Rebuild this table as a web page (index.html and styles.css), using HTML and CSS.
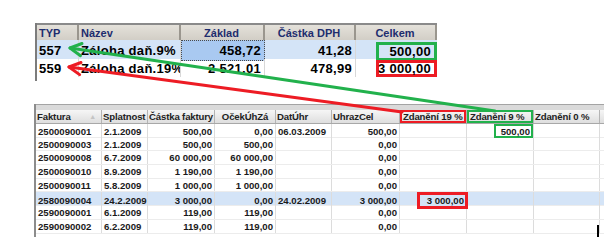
FILE: index.html
```html
<!DOCTYPE html>
<html lang="cs">
<head>
<meta charset="utf-8">
<title>Zálohy</title>
<link rel="stylesheet" href="styles.css">
</head>
<body>
<div class="page">
  <div class="top">
    <div class="trow thead">
      <div class="c">TYP</div>
      <div class="c">Název</div>
      <div class="c ctr">Základ</div>
      <div class="c ctr">Částka DPH</div>
      <div class="c ctr">Celkem</div>
    </div>
    <div class="trow r1 sel">
      <div class="c">557</div>
      <div class="c">Záloha daň.9%</div>
      <div class="c num focus">458,72</div>
      <div class="c num">41,28</div>
      <div class="c boxcell"><span class="tbox green">500,00</span></div>
    </div>
    <div class="trow r2">
      <div class="c">559</div>
      <div class="c">Záloha daň.19%</div>
      <div class="c num">2 521,01</div>
      <div class="c num">478,99</div>
      <div class="c boxcell"><span class="tbox red">3 000,00</span></div>
    </div>
  </div>

  <div class="grid">
    <div class="band"></div>
    <div class="grow ghead">
      <div class="g">Faktura<span class="sort">▲</span></div>
      <div class="g">Splatnost</div>
      <div class="g">Částka faktury</div>
      <div class="g ctr">OčekÚhZá</div>
      <div class="g">DatÚhr</div>
      <div class="g">UhrazCel</div>
      <div class="g hred">Zdanění 19 %</div>
      <div class="g hgreen">Zdanění 9 %</div>
      <div class="g">Zdanění 0 %</div>
    </div>
    <div class="grow">
      <div class="g">2500090001</div><div class="g">2.1.2009</div><div class="g num">500,00</div><div class="g num">0,00</div><div class="g">06.03.2009</div><div class="g num">500,00</div><div class="g"></div><div class="g num bx"><span class="gbox green">500,00</span></div><div class="g"></div>
    </div>
    <div class="grow">
      <div class="g">2500090003</div><div class="g">2.1.2009</div><div class="g num">500,00</div><div class="g num">500,00</div><div class="g"></div><div class="g num">0,00</div><div class="g"></div><div class="g"></div><div class="g"></div>
    </div>
    <div class="grow">
      <div class="g">2500090008</div><div class="g">6.7.2009</div><div class="g num">60 000,00</div><div class="g num">60 000,00</div><div class="g"></div><div class="g num">0,00</div><div class="g"></div><div class="g"></div><div class="g"></div>
    </div>
    <div class="grow">
      <div class="g">2500090010</div><div class="g">8.9.2009</div><div class="g num">1 190,00</div><div class="g num">1 190,00</div><div class="g"></div><div class="g num">0,00</div><div class="g"></div><div class="g"></div><div class="g"></div>
    </div>
    <div class="grow">
      <div class="g">2500090011</div><div class="g">5.8.2009</div><div class="g num">1 000,00</div><div class="g num">1 000,00</div><div class="g"></div><div class="g num">0,00</div><div class="g"></div><div class="g"></div><div class="g"></div>
    </div>
    <div class="grow hl">
      <div class="g">2580090004</div><div class="g">24.2.2009</div><div class="g num">3 000,00</div><div class="g num">0,00</div><div class="g">24.02.2009</div><div class="g num">3 000,00</div><div class="g num bx"><span class="gbox red big">3 000,00</span></div><div class="g"></div><div class="g"></div>
    </div>
    <div class="grow">
      <div class="g">2590090001</div><div class="g">6.1.2009</div><div class="g num">119,00</div><div class="g num">119,00</div><div class="g"></div><div class="g num">0,00</div><div class="g"></div><div class="g"></div><div class="g"></div>
    </div>
    <div class="grow">
      <div class="g">2590090002</div><div class="g">6.2.2009</div><div class="g num">119,00</div><div class="g num">119,00</div><div class="g"></div><div class="g num">0,00</div><div class="g"></div><div class="g"></div><div class="g"></div>
    </div>
  </div>

  <span class="cursor"></span>

  <svg class="arrows" width="604" height="240" viewBox="0 0 604 240">
    <g fill="none" stroke-width="3" stroke-linecap="round" stroke-linejoin="round">
      <g stroke="#22b14c">
        <path d="M70 48 L495 111"/>
        <path d="M82 43.5 L70 48 L80.5 55.7"/>
      </g>
      <g stroke="#ed1c24">
        <path d="M69 67 L402 112"/>
        <path d="M81 62.5 L69 67 L79.6 74.6"/>
      </g>
    </g>
  </svg>
</div>
</body>
</html>
```

FILE: styles.css
```css
* { box-sizing: border-box; }

html, body {
  margin: 0;
  padding: 0;
  background: #ffffff;
}

.page {
  position: relative;
  width: 604px;
  height: 240px;
  overflow: hidden;
  font-family: "Liberation Sans", Arial, sans-serif;
}

/* ---------- top table ---------- */
.top {
  margin: 23px 0 0 35px;
  width: 402px;
  border-left: 2px solid #7c7c7c;
  padding-bottom: 4px;
}

.trow {
  display: grid;
  grid-template-columns: 42px 102px 84px 91px 81px;
  height: 19px;
}

.trow.r2 { height: 18px; }

.trow .c {
  display: flex;
  align-items: center;
  padding: 0 3px 0 2px;
  font-size: 13px;
  font-weight: bold;
  color: #000;
  letter-spacing: 0.3px;
  white-space: nowrap;
  overflow: hidden;
  border-right: 1px solid #d8d8d8;
}

.trow .c:last-child { border-right: none; }

.thead {
  height: 17px;
  background: linear-gradient(#e4e1da, #d2cec6);
  border-top: 2px solid #8a8a8a;
}

.thead .c {
  font-size: 11px;
  color: #1e2d6e;
  letter-spacing: 0;
  border-right: 2px solid #9a968e;
}

.thead .c:last-child { border-right: 2px solid #9a968e; }

.c.ctr { justify-content: center; }
.c.num { justify-content: flex-end; }

.sel { background: #d4e4f7; }

.c.focus {
  background: #a9c9f1;
  border: 1px dotted #4a4a4a;
}

.boxcell {
  justify-content: flex-end;
  padding: 0 !important;
  overflow: visible !important;
}

.tbox {
  display: flex;
  align-items: center;
  justify-content: flex-end;
  width: 61px;
  height: 19px;
  padding-right: 3px;
  border: 3px solid;
  position: relative;
  z-index: 1;
}

.r1 .tbox { margin-top: 2px; }
.r2 .tbox { margin-top: 1px; height: 17px; }

.tbox.green { border-color: #22b14c; background: #d4e4f7; }
.tbox.red { border-color: #ed1c24; background: #ffffff; }

/* ---------- bottom grid ---------- */
.grid {
  margin: 23px 0 0 34px;
  width: 570px;
  border-left: 2px solid #8c8c8c;
  padding-bottom: 3px;
}

.band {
  height: 6px;
  background: #dadada;
  border-top: 1px solid #a4a4a4;
}

.grow {
  display: grid;
  grid-template-columns: 66px 46px 67px 61px 56px 68px 67px 67px 66px;
  height: 13.7px;
  border-bottom: 1px solid #ececec;
}

.g {
  display: flex;
  align-items: center;
  padding: 0 2px;
  font-size: 9.6px;
  font-weight: bold;
  color: #1a1a1a;
  white-space: nowrap;
  overflow: hidden;
  border-right: 1px solid #dcdcdc;
}

.g.num { justify-content: flex-end; }
.g.ctr { justify-content: center; }

.ghead {
  height: 14px;
  background: linear-gradient(#f6f6f6, #dedede);
  border-bottom: 1px solid #a8a8a8;
}

.ghead .g {
  color: #222;
  padding: 0 1px;
  letter-spacing: -0.15px;
  border-right: 1px solid #b4b4b4;
  position: relative;
}

.sort {
  margin-left: auto;
  font-size: 7px;
  color: #c4c4c4;
  padding-right: 4px;
}

.g.hred { box-shadow: inset 0 0 0 2px #ed1c24; padding-left: 3px; }
.g.hgreen { box-shadow: inset 0 0 0 2px #22b14c; padding-left: 3px; }

.hl { background: #d4e4f7; }

.g.bx {
  overflow: visible;
  padding: 0;
  position: relative;
  z-index: 2;
}

.gbox {
  display: flex;
  align-items: center;
  justify-content: flex-end;
  flex-shrink: 0;
  border: 2px solid;
  padding-right: 1px;
  background: #fff;
}

.gbox.green {
  border-color: #22b14c;
  width: 39px;
  height: 14px;
}

.gbox.red {
  border-color: #ed1c24;
  width: 51px;
  height: 17px;
  margin-right: -2px;
  background: #d4e4f7;
  border-width: 3px;
}

.cursor {
  position: absolute;
  left: 597px;
  top: 225px;
  width: 2px;
  height: 12px;
  background: #000;
}

.arrows {
  position: absolute;
  left: 0;
  top: 0;
  pointer-events: none;
  z-index: 5;
}
```
